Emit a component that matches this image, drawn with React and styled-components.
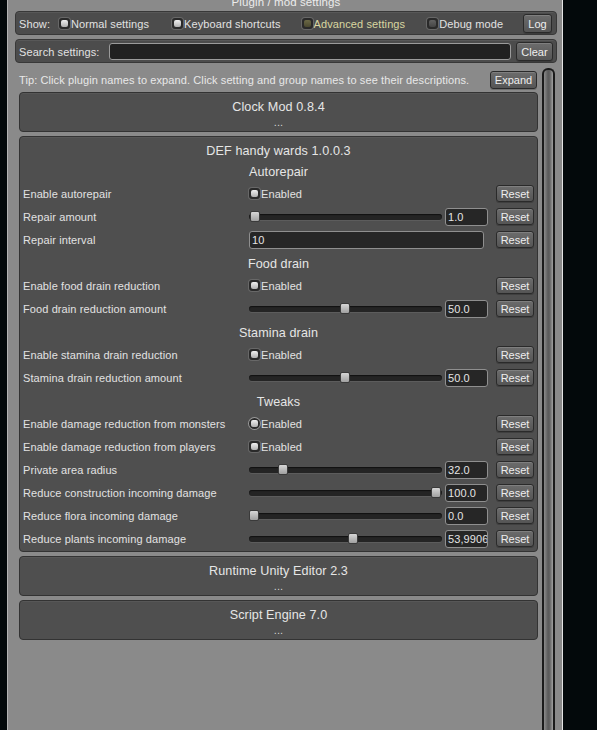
import React from "react";
import styled, { createGlobalStyle } from "styled-components";

const GlobalStyle = createGlobalStyle`
  *, *::before, *::after { box-sizing: border-box; }
  html, body {
    margin: 0;
    padding: 0;
    height: 100%;
    overflow: hidden;
    background: #03090b;
  }
  body {
    font-family: "Liberation Sans", Arial, sans-serif;
    font-size: 11px;
    letter-spacing: 0.1px;
    color: #e4e4e4;
  }
`;

const Page = styled.div`
  display: flex;
  height: 730px;
  padding-left: 7px;
  overflow: hidden;
`;

const Window = styled.div`
  width: 556px;
  height: 100%;
  display: flex;
  flex-direction: column;
  padding: 0 5px 0 7px;
  background: #8a8a8a;
  border-left: 1px solid #b3b3b3;
  border-right: 1px solid #e4e4e4;
`;

const WindowTitle = styled.div`
  margin: -4px 0 3px;
  height: 12px;
  line-height: 12px;
  font-size: 11.5px;
  text-align: center;
  color: #ececec;
`;

const Bar = styled.div`
  display: flex;
  align-items: center;
  height: 24px;
  padding: 1px 3px 0;
  background: #4c4c4c;
  border: 1px solid #383838;
  border-radius: 4px;
  box-shadow: inset 0 1px 0 rgba(255, 255, 255, 0.07);

  & + & {
    margin-top: 4px;
  }
`;

const BarLabel = styled.span`
  white-space: nowrap;
  color: #e2e2e2;
`;

const Toggle = styled.label`
  display: flex;
  align-items: center;
  gap: 1px;
  margin-left: ${(p) => p.$gap || 0}px;
  white-space: nowrap;
  color: ${(p) => (p.$accent ? "#d9d6a0" : "#e2e2e2")};
`;

const Check = styled.span`
  position: relative;
  flex: none;
  width: 11px;
  height: 11px;
  border-radius: ${(p) => (p.$ring ? "50%" : "3px")};
  background: #2a2a2a;
  box-shadow: ${(p) =>
    p.$ring ? "0 0 0 1px #9a9a9a" : "0 0 0 1px rgba(130,130,130,0.5)"};

  &::after {
    content: "";
    position: absolute;
    left: 2px;
    top: 2px;
    width: 7px;
    height: 7px;
    border-radius: 2px;
    background: ${(p) =>
      p.$on
        ? "linear-gradient(#f0f0f0, #b0b0b0)"
        : p.$olive
        ? "linear-gradient(#6c6946, #4a482f)"
        : "linear-gradient(#626262, #454545)"};
  }
`;

const Button = styled.div`
  flex: none;
  display: flex;
  align-items: center;
  justify-content: center;
  width: ${(p) => p.$w}px;
  height: ${(p) => p.$h || 17}px;
  margin-left: ${(p) => (p.$auto ? "auto" : `${p.$ml || 0}px`)};
  margin-right: ${(p) => p.$mr || 0}px;
  border: 1px solid #2a2a2a;
  border-radius: 3px;
  background: linear-gradient(#6c6c6c, #555555);
  box-shadow: inset 0 1px 0 rgba(255, 255, 255, 0.14), 0 1px 0 rgba(0, 0, 0, 0.2);
  color: #eeeeee;
  letter-spacing: 0;
  white-space: nowrap;
`;

const SearchInput = styled.div`
  flex: 1;
  height: 17px;
  margin-left: 10px;
  background: #212121;
  border: 1px solid #9b9b9b;
  border-radius: 3px;
`;

const ContentRow = styled.div`
  flex: 1;
  display: flex;
  gap: 4px;
  margin-top: 5px;
  padding: 0 2px 0 4px;
  min-height: 0;
`;

const ScrollContent = styled.div`
  width: 519px;
  padding-top: 2px;
  display: flex;
  flex-direction: column;
  gap: 4px;
`;

const ScrollTrack = styled.div`
  width: 13px;
  height: 100%;
  border: 2px solid #1b1b1b;
  border-bottom: none;
  border-radius: 6px 6px 0 0;
  background: linear-gradient(90deg, #8c8c8c, #5a5a5a 45%, #636363 65%, #a2a2a2);
`;

const TipRow = styled.div`
  display: flex;
  align-items: center;
  height: 20px;
  margin-bottom: -2px;
  color: #e8e8e8;
`;

const PluginBox = styled.div`
  display: flex;
  flex-direction: column;
  padding: ${(p) => (p.$open ? "3px 3px 1px" : "6px 3px 3px")};
  background: #4f4f4f;
  border: 1px solid #333333;
  border-radius: 4px;
  box-shadow: inset 0 1px 0 rgba(255, 255, 255, 0.05);
`;

const PluginName = styled.div`
  height: ${(p) => (p.$open ? 19 : 17)}px;
  padding-top: ${(p) => (p.$open ? 2 : 0)}px;
  line-height: ${(p) => (p.$open ? 19 : 17)}px;
  font-size: 12.6px;
  text-align: center;
  color: #e6e6e6;
`;

const Dots = styled.div`
  height: 12px;
  line-height: 13px;
  text-align: center;
  color: #d2d2d2;
`;

const GroupName = styled.div`
  height: 23px;
  padding-top: 2px;
  line-height: 23px;
  font-size: 12.6px;
  text-align: center;
  color: #e6e6e6;
`;

const SettingRow = styled.div`
  display: grid;
  grid-template-columns: 218px 239px 38px;
  column-gap: 8px;
  align-items: center;
  height: 23px;
`;

const SettingLabel = styled.span`
  white-space: nowrap;
  color: #e2e2e2;
`;

const Value = styled.div`
  display: flex;
  align-items: center;
  gap: 3px;
`;

const Track = styled.div`
  position: relative;
  width: 193px;
  height: 6px;
  border-radius: 3px;
  background: #242424;
  box-shadow: inset 0 1px 1px #111111, 0 1px 0 rgba(255, 255, 255, 0.08);
`;

const Thumb = styled.span`
  position: absolute;
  top: -3px;
  width: 10px;
  height: 11px;
  border-radius: 2px;
  border: 1px solid #3a3a3a;
  background: linear-gradient(#d6d6d6, #a0a0a0);
`;

const Field = styled.div`
  width: ${(p) => p.$w}px;
  height: 18px;
  padding: 0 2px;
  line-height: 16px;
  overflow: hidden;
  white-space: nowrap;
  background: #262626;
  border: 1px solid #8f8f8f;
  border-radius: 3px;
  color: #e4e4e4;
`;

const groups = [
  {
    name: "Autorepair",
    settings: [
      { label: "Enable autorepair", type: "toggle" },
      { label: "Repair amount", type: "slider", frac: 0.005, value: "1.0" },
      { label: "Repair interval", type: "text", value: "10" },
    ],
  },
  {
    name: "Food drain",
    settings: [
      { label: "Enable food drain reduction", type: "toggle" },
      { label: "Food drain reduction amount", type: "slider", frac: 0.497, value: "50.0" },
    ],
  },
  {
    name: "Stamina drain",
    settings: [
      { label: "Enable stamina drain reduction", type: "toggle" },
      { label: "Stamina drain reduction amount", type: "slider", frac: 0.497, value: "50.0" },
    ],
  },
  {
    name: "Tweaks",
    settings: [
      { label: "Enable damage reduction from monsters", type: "toggle", ring: true },
      { label: "Enable damage reduction from players", type: "toggle" },
      { label: "Private area radius", type: "slider", frac: 0.16, value: "32.0" },
      { label: "Reduce construction incoming damage", type: "slider", frac: 0.995, value: "100.0" },
      { label: "Reduce flora incoming damage", type: "slider", frac: 0, value: "0.0" },
      { label: "Reduce plants incoming damage", type: "slider", frac: 0.54, value: "53,9906" },
    ],
  },
];

function SettingValue({ s }) {
  if (s.type === "toggle") {
    return (
      <Toggle>
        <Check $on $ring={s.ring} />
        Enabled
      </Toggle>
    );
  }
  if (s.type === "slider") {
    return (
      <Value>
        <Track>
          <Thumb style={{ left: Math.round(s.frac * 183) }} />
        </Track>
        <Field $w={43}>{s.value}</Field>
      </Value>
    );
  }
  return (
    <Value>
      <Field $w={235}>{s.value}</Field>
    </Value>
  );
}

function CollapsedPlugin({ name }) {
  return (
    <PluginBox>
      <PluginName>{name}</PluginName>
      <Dots>...</Dots>
    </PluginBox>
  );
}

export default function App() {
  return (
    <>
      <GlobalStyle />
      <Page>
        <Window>
          <WindowTitle>Plugin / mod settings</WindowTitle>

          <Bar>
            <BarLabel>Show:</BarLabel>
            <Toggle $gap={9}>
              <Check $on />
              Normal settings
            </Toggle>
            <Toggle $gap={23}>
              <Check $on />
              Keyboard shortcuts
            </Toggle>
            <Toggle $gap={21} $accent>
              <Check $olive />
              Advanced settings
            </Toggle>
            <Toggle $gap={22}>
              <Check />
              Debug mode
            </Toggle>
            <Button $w={29} $h={19} $auto $mr={1}>
              Log
            </Button>
          </Bar>

          <Bar>
            <BarLabel>Search settings:</BarLabel>
            <SearchInput />
            <Button $w={37} $h={19} $ml={5}>
              Clear
            </Button>
          </Bar>

          <ContentRow>
            <ScrollContent>
              <TipRow>
                Tip: Click plugin names to expand. Click setting and group names to see their
                descriptions.
                <Button $w={47} $h={18} $auto $mr={1}>
                  Expand
                </Button>
              </TipRow>

              <CollapsedPlugin name="Clock Mod 0.8.4" />

              <PluginBox $open>
                <PluginName $open>DEF handy wards 1.0.0.3</PluginName>
                {groups.map((g) => (
                  <React.Fragment key={g.name}>
                    <GroupName>{g.name}</GroupName>
                    {g.settings.map((s) => (
                      <SettingRow key={s.label}>
                        <SettingLabel>{s.label}</SettingLabel>
                        <SettingValue s={s} />
                        <Button $w={38}>Reset</Button>
                      </SettingRow>
                    ))}
                  </React.Fragment>
                ))}
              </PluginBox>

              <CollapsedPlugin name="Runtime Unity Editor 2.3" />
              <CollapsedPlugin name="Script Engine 7.0" />
            </ScrollContent>
            <ScrollTrack />
          </ContentRow>
        </Window>
      </Page>
    </>
  );
}
